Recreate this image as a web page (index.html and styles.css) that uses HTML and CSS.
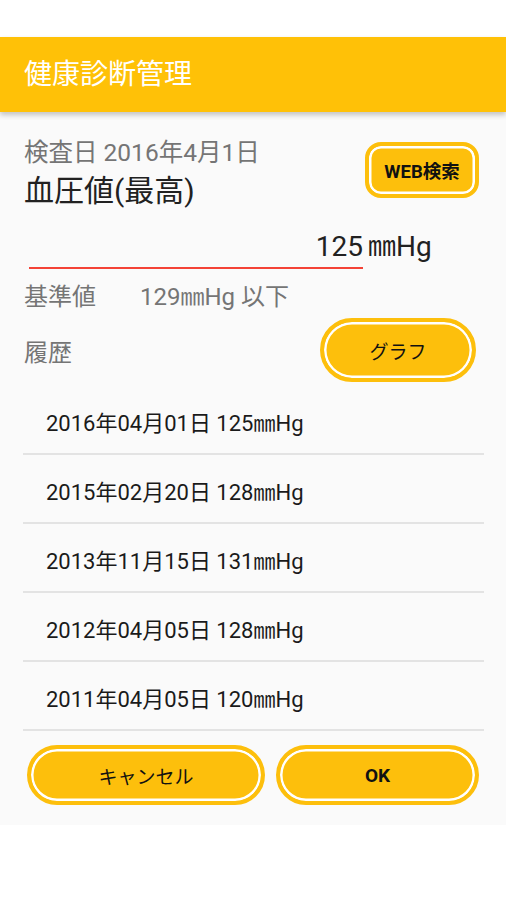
FILE: index.html
```html
<!DOCTYPE html>
<html lang="ja">
<head>
<meta charset="utf-8">
<link rel="stylesheet" href="styles.css">
</head>
<body>
<div class="statusbar"></div>
<header class="appbar"><h1 class="title">健康診断管理</h1></header>
<main class="content">
  <div class="top-row">
    <div class="heading">
      <div class="date">検査日 2016年4月1日</div>
      <div class="item-name">血圧値(最高)</div>
    </div>
    <button class="btn btn-web">WEB検索</button>
  </div>
  <div class="value-row">
    <div class="field">125</div>
    <div class="unit">㎜Hg</div>
  </div>
  <div class="range-row">
    <span class="range-label">基準値</span>
    <span class="range-value">129㎜Hg 以下</span>
  </div>
  <div class="history-row">
    <span class="history-label">履歴</span>
    <button class="btn btn-graph">グラフ</button>
  </div>
  <ul class="history-list">
    <li>2016年04月01日 125㎜Hg</li>
    <li>2015年02月20日 128㎜Hg</li>
    <li>2013年11月15日 131㎜Hg</li>
    <li>2012年04月05日 128㎜Hg</li>
    <li>2011年04月05日 120㎜Hg</li>
  </ul>
  <div class="actions">
    <button class="btn btn-cancel">キャンセル</button>
    <button class="btn btn-ok">OK</button>
  </div>
</main>
</body>
</html>
```
FILE: styles.css
```css
* { box-sizing: border-box; }
html, body {
  margin: 0;
  padding: 0;
  background: #ffffff;
  font-family: Roboto, "Noto Sans CJK JP", sans-serif;
}
.statusbar { height: 37px; background: #ffffff; }
.appbar {
  height: 75px;
  background: #ffc107;
  display: flex;
  align-items: center;
  padding-left: 24px;
  box-shadow: 0 3px 5px rgba(0,0,0,0.22);
  position: relative;
  z-index: 1;
}
.title {
  margin: 0;
  color: #ffffff;
  font-size: 28px;
  font-weight: 400;
  line-height: 1;
}
.content {
  background: #fafafa;
  height: 713px;
  padding: 26px 0 0 0;
}
.top-row {
  display: flex;
  justify-content: space-between;
  padding: 0 27px 0 24px;
}
.date {
  color: #757575;
  font-size: 24.5px;
  line-height: 30px;
}
.item-name {
  color: #212121;
  font-size: 30px;
  line-height: 40px;
  margin-top: 3px;
}
.btn {
  font-family: Roboto, "Noto Sans CJK JP", sans-serif;
  background: #fdbf0c;
  border: 4.5px solid #fdbf0c;
  box-shadow: inset 0 0 0 2.5px #ffffff;
  color: #111111;
  font-size: 19px;
  padding: 0;
  cursor: pointer;
}
.btn-web {
  margin-top: 4px;
  width: 114px;
  height: 56px;
  border-radius: 16px;
  font-weight: 700;
  font-size: 18.5px;
}
.value-row {
  display: flex;
  align-items: baseline;
  margin-top: 16px;
  padding-left: 29px;
}
.field {
  width: 334px;
  text-align: right;
  font-size: 28px;
  line-height: 40px;
  color: #212121;
  border-bottom: 2px solid #f44336;
}
.unit {
  font-size: 28px;
  line-height: 40px;
  color: #212121;
  padding-left: 5px;
}
.range-row {
  padding-left: 24px;
  margin-top: 13px;
  color: #757575;
  font-size: 24px;
  line-height: 30px;
}
.range-value { margin-left: 38px; }
.history-row {
  display: flex;
  align-items: center;
  justify-content: space-between;
  padding: 0 30px 0 24px;
  margin-top: 6px;
}
.history-label {
  color: #757575;
  font-size: 24px;
}
.btn-graph {
  width: 156px;
  height: 64px;
  border-radius: 32px;
}
.history-list {
  list-style: none;
  margin: 4px 22px 0 23px;
  padding: 0;
}
.history-list li {
  height: 69px;
  display: flex;
  align-items: center;
  padding-left: 23px;
  font-size: 22px;
  color: #1a1a1a;
  border-bottom: 2px solid #e3e3e3;
  padding-top: 3px;
}
.actions {
  display: flex;
  gap: 11px;
  padding-left: 27px;
  margin-top: 14px;
}
.btn-cancel {
  width: 238px;
  height: 60px;
  border-radius: 30px;
}
.btn-ok {
  width: 203px;
  height: 60px;
  border-radius: 30px;
  font-weight: 700;
}
```
